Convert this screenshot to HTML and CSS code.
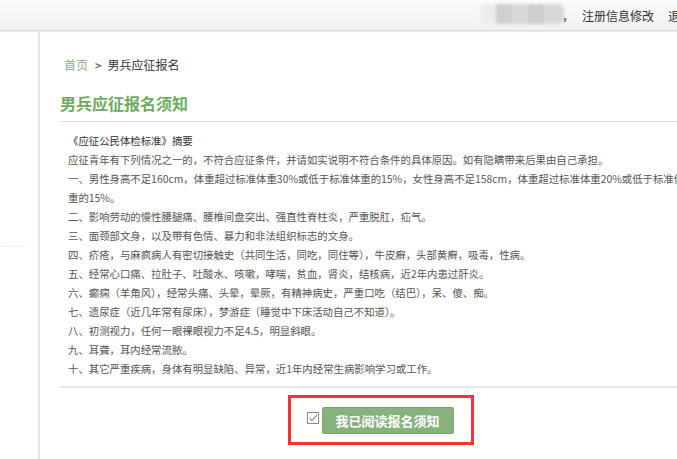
FILE: index.html
```html
<!DOCTYPE html>
<html lang="zh-CN">
<head>
<meta charset="utf-8">
<title>男兵应征报名须知</title>
<link rel="stylesheet" href="styles.css">
</head>
<body>
<header class="topbar">
  <div class="user">
    <span class="blur"><i class="b1"></i><i class="b2"></i><i class="b3"></i><i class="b4"></i><i class="b5"></i></span>
    <span class="comma">，</span>
    <a class="link">注册信息修改</a>
    <a class="link">退出</a>
  </div>
</header>
<div class="page">
  <aside class="sidebar"><div class="sep"></div></aside>
  <main class="main">
    <nav class="crumb"><a class="home">首页</a><span class="arrow">&gt;</span><span>男兵应征报名</span></nav>
    <h1 class="title">男兵应征报名须知</h1>
    <section class="notice">
      <p class="head">《应征公民体检标准》摘要</p>
      <p>应征青年有下列情况之一的，不符合应征条件，并请如实说明不符合条件的具体原因。如有隐瞒带来后果由自己承担。</p>
      <p>一、男性身高不足160cm，体重超过标准体重30%或低于标准体重的15%，女性身高不足158cm，体重超过标准体重20%或低于标准体重的15%。</p>
      <p>二、影响劳动的慢性腰腿痛、腰椎间盘突出、强直性脊柱炎，严重脱肛，疝气。</p>
      <p>三、面颈部文身，以及带有色情、暴力和非法组织标志的文身。</p>
      <p>四、疥疮，与麻疯病人有密切接触史（共同生活，同吃，同住等），牛皮癣，头部黄癣，吸毒，性病。</p>
      <p>五、经常心口痛、拉肚子、吐酸水、咳嗽，哮喘，贫血，肾炎，结核病，近2年内患过肝炎。</p>
      <p>六、癫痫（羊角风），经常头痛、头晕，晕厥，有精神病史，严重口吃（结巴），呆、傻、痴。</p>
      <p>七、遗尿症（近几年常有尿床），梦游症（睡觉中下床活动自己不知道）。</p>
      <p>八、初测视力，任何一眼裸眼视力不足4.5，明显斜眼。</p>
      <p>九、耳聋，耳内经常流脓。</p>
      <p>十、其它严重疾病，身体有明显缺陷、异常，近1年内经常生病影响学习或工作。</p>
    </section>
    <div class="actions">
      <span class="check"><svg width="12" height="12" viewBox="0 0 12 12"><rect x="0.5" y="0.5" width="11" height="11" fill="#fff" stroke="#8a8a8a"/><path d="M2.5 6.2 L5 8.5 L9.8 3.2" fill="none" stroke="#555" stroke-width="1"/></svg></span>
      <button class="btn">我已阅读报名须知</button>
      <div class="mark"></div>
    </div>
  </main>
</div>
</body>
</html>
```
FILE: styles.css
```css
html { overflow: hidden; }
body {
  margin: 0;
  font-family: "Noto Sans CJK SC", "Noto Sans", sans-serif;
  color: #444;
  background: #fff;
}
.topbar {
  height: 30px;
  border-bottom: 1px solid #dadada;
  background: linear-gradient(#fbfbfb, #f1f1f1);
  display: flex;
  justify-content: flex-end;
  align-items: center;
  box-shadow: 0 1px 1px #ececec;
  overflow: hidden;
}
.user {
  display: flex;
  align-items: center;
  flex-shrink: 0;
  font-size: 12px;
  color: #333;
  margin-right: -23px;
  white-space: nowrap;
}
.blur {
  display: flex;
  height: 20px;
  filter: blur(1.5px);
  margin-top: -3px;
}
.blur i { display: block; height: 20px; }
.b1 { width: 16px; background: #ececec; border-radius: 6px 0 0 6px; }
.b2 { width: 16px; background: #cfcfcf; }
.b3 { width: 16px; background: #d9d9d9; }
.b4 { width: 16px; background: #cdcdcd; }
.b5 { width: 20px; background: #d8d8d8; border-radius: 0 6px 6px 0; }
.comma { margin-left: -2px; width: 14px; }
.link { margin-left: 6px; margin-right: 8px; color: #333; }
.page { display: flex; }
.sidebar {
  width: 38px;
  flex-shrink: 0;
  border-right: 2px solid #e8e8e8;
  min-height: 428px;
}
.sep {
  margin-top: 215px;
  width: 26px;
  border-top: 1px dotted #e6e6e6;
}
.main {
  width: 640px;
  flex-shrink: 0;
  padding-left: 20px;
  position: relative;
}
.crumb {
  margin-top: 26px;
  font-size: 12px;
  line-height: 16px;
  color: #333;
  padding-left: 4px;
}
.home { color: #86b579; }
.arrow { color: #666; margin: 0 6px 0 7px; font-size: 11px; font-weight: bold; }
.title {
  margin: 19px 0 0;
  font-size: 16px;
  line-height: 22px;
  font-weight: bold;
  color: #6fab61;
  padding-bottom: 7px;
  border-bottom: 1px solid #dedede;
}
.notice {
  padding: 9px 13px 8px 8px;
  font-size: 10.4px;
  line-height: 19px;
  color: #555;
  border-bottom: 2px solid #e6e6e6;
}
.notice p { margin: 0; }
.notice .head { color: #333; }
.actions {
  display: flex;
  justify-content: center;
  align-items: center;
  gap: 3px;
  padding-top: 19px;
  position: relative;
}
.check { display: flex; margin-top: -6px; }
.btn {
  width: 132px;
  height: 27px;
  border: 1px solid #7aa66e;
  border-radius: 2px;
  background: #88b27d;
  color: #fff;
  font-family: inherit;
  font-size: 13px;
  font-weight: bold;
  padding: 0;
}
.mark {
  position: absolute;
  left: 228px;
  top: 7px;
  width: 180px;
  height: 44px;
  border: 3px solid #f23434;
}
```
